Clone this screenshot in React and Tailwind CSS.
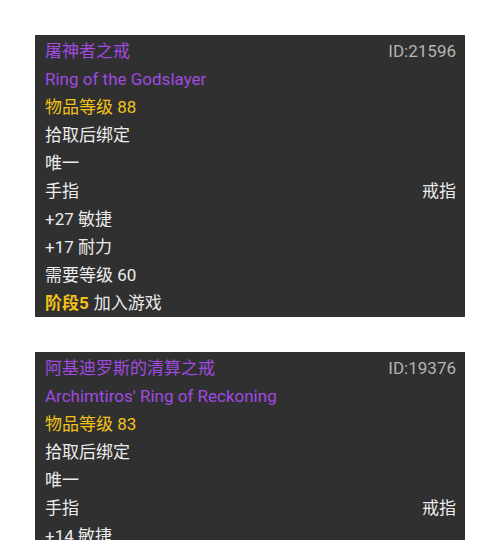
import React from "react";

const P = "text-[#a04ae0]";
const Y = "text-[#f2c21a]";
const W = "text-[#ececec]";

function Row({ left, right, cls = W }) {
  return (
    <div className="flex justify-between items-center h-[28px]">
      <span className={cls}>{left}</span>
      {right && <span className={right.cls}>{right.text}</span>}
    </div>
  );
}

function Panel({ items }) {
  return (
    <div className="bg-[#303030] pl-[10px] pr-[9px] pt-[2px] pb-0 text-[17px] leading-[28px]">
      {items}
    </div>
  );
}

export default function App() {
  return (
    <div
      className="w-[500px] h-[540px] bg-white overflow-hidden px-[35px] pt-[35px] flex flex-col gap-[35px]"
      style={{ fontFamily: "Roboto, 'Noto Sans CJK SC', sans-serif" }}
    >
      <Panel
        items={
          <>
            <Row left="屠神者之戒" cls={P} right={{ text: "ID:21596", cls: "text-[#b4b4b4]" }} />
            <Row left="Ring of the Godslayer" cls={P} />
            <Row left="物品等级 88" cls={Y} />
            <Row left="拾取后绑定" />
            <Row left="唯一" />
            <Row left="手指" right={{ text: "戒指", cls: W }} />
            <Row left="+27 敏捷" />
            <Row left="+17 耐力" />
            <Row left="需要等级 60" />
            <div className="h-[28px] flex items-center">
              <span className={Y + " font-bold"}>阶段5</span>
              <span className={W + " ml-[5px]"}>加入游戏</span>
            </div>
          </>
        }
      />
      <Panel
        items={
          <>
            <Row left="阿基迪罗斯的清算之戒" cls={P} right={{ text: "ID:19376", cls: "text-[#b4b4b4]" }} />
            <Row left="Archimtiros' Ring of Reckoning" cls={P} />
            <Row left="物品等级 83" cls={Y} />
            <Row left="拾取后绑定" />
            <Row left="唯一" />
            <Row left="手指" right={{ text: "戒指", cls: W }} />
            <Row left="+14 敏捷" />
            <Row left="+13 耐力" />
          </>
        }
      />
    </div>
  );
}
